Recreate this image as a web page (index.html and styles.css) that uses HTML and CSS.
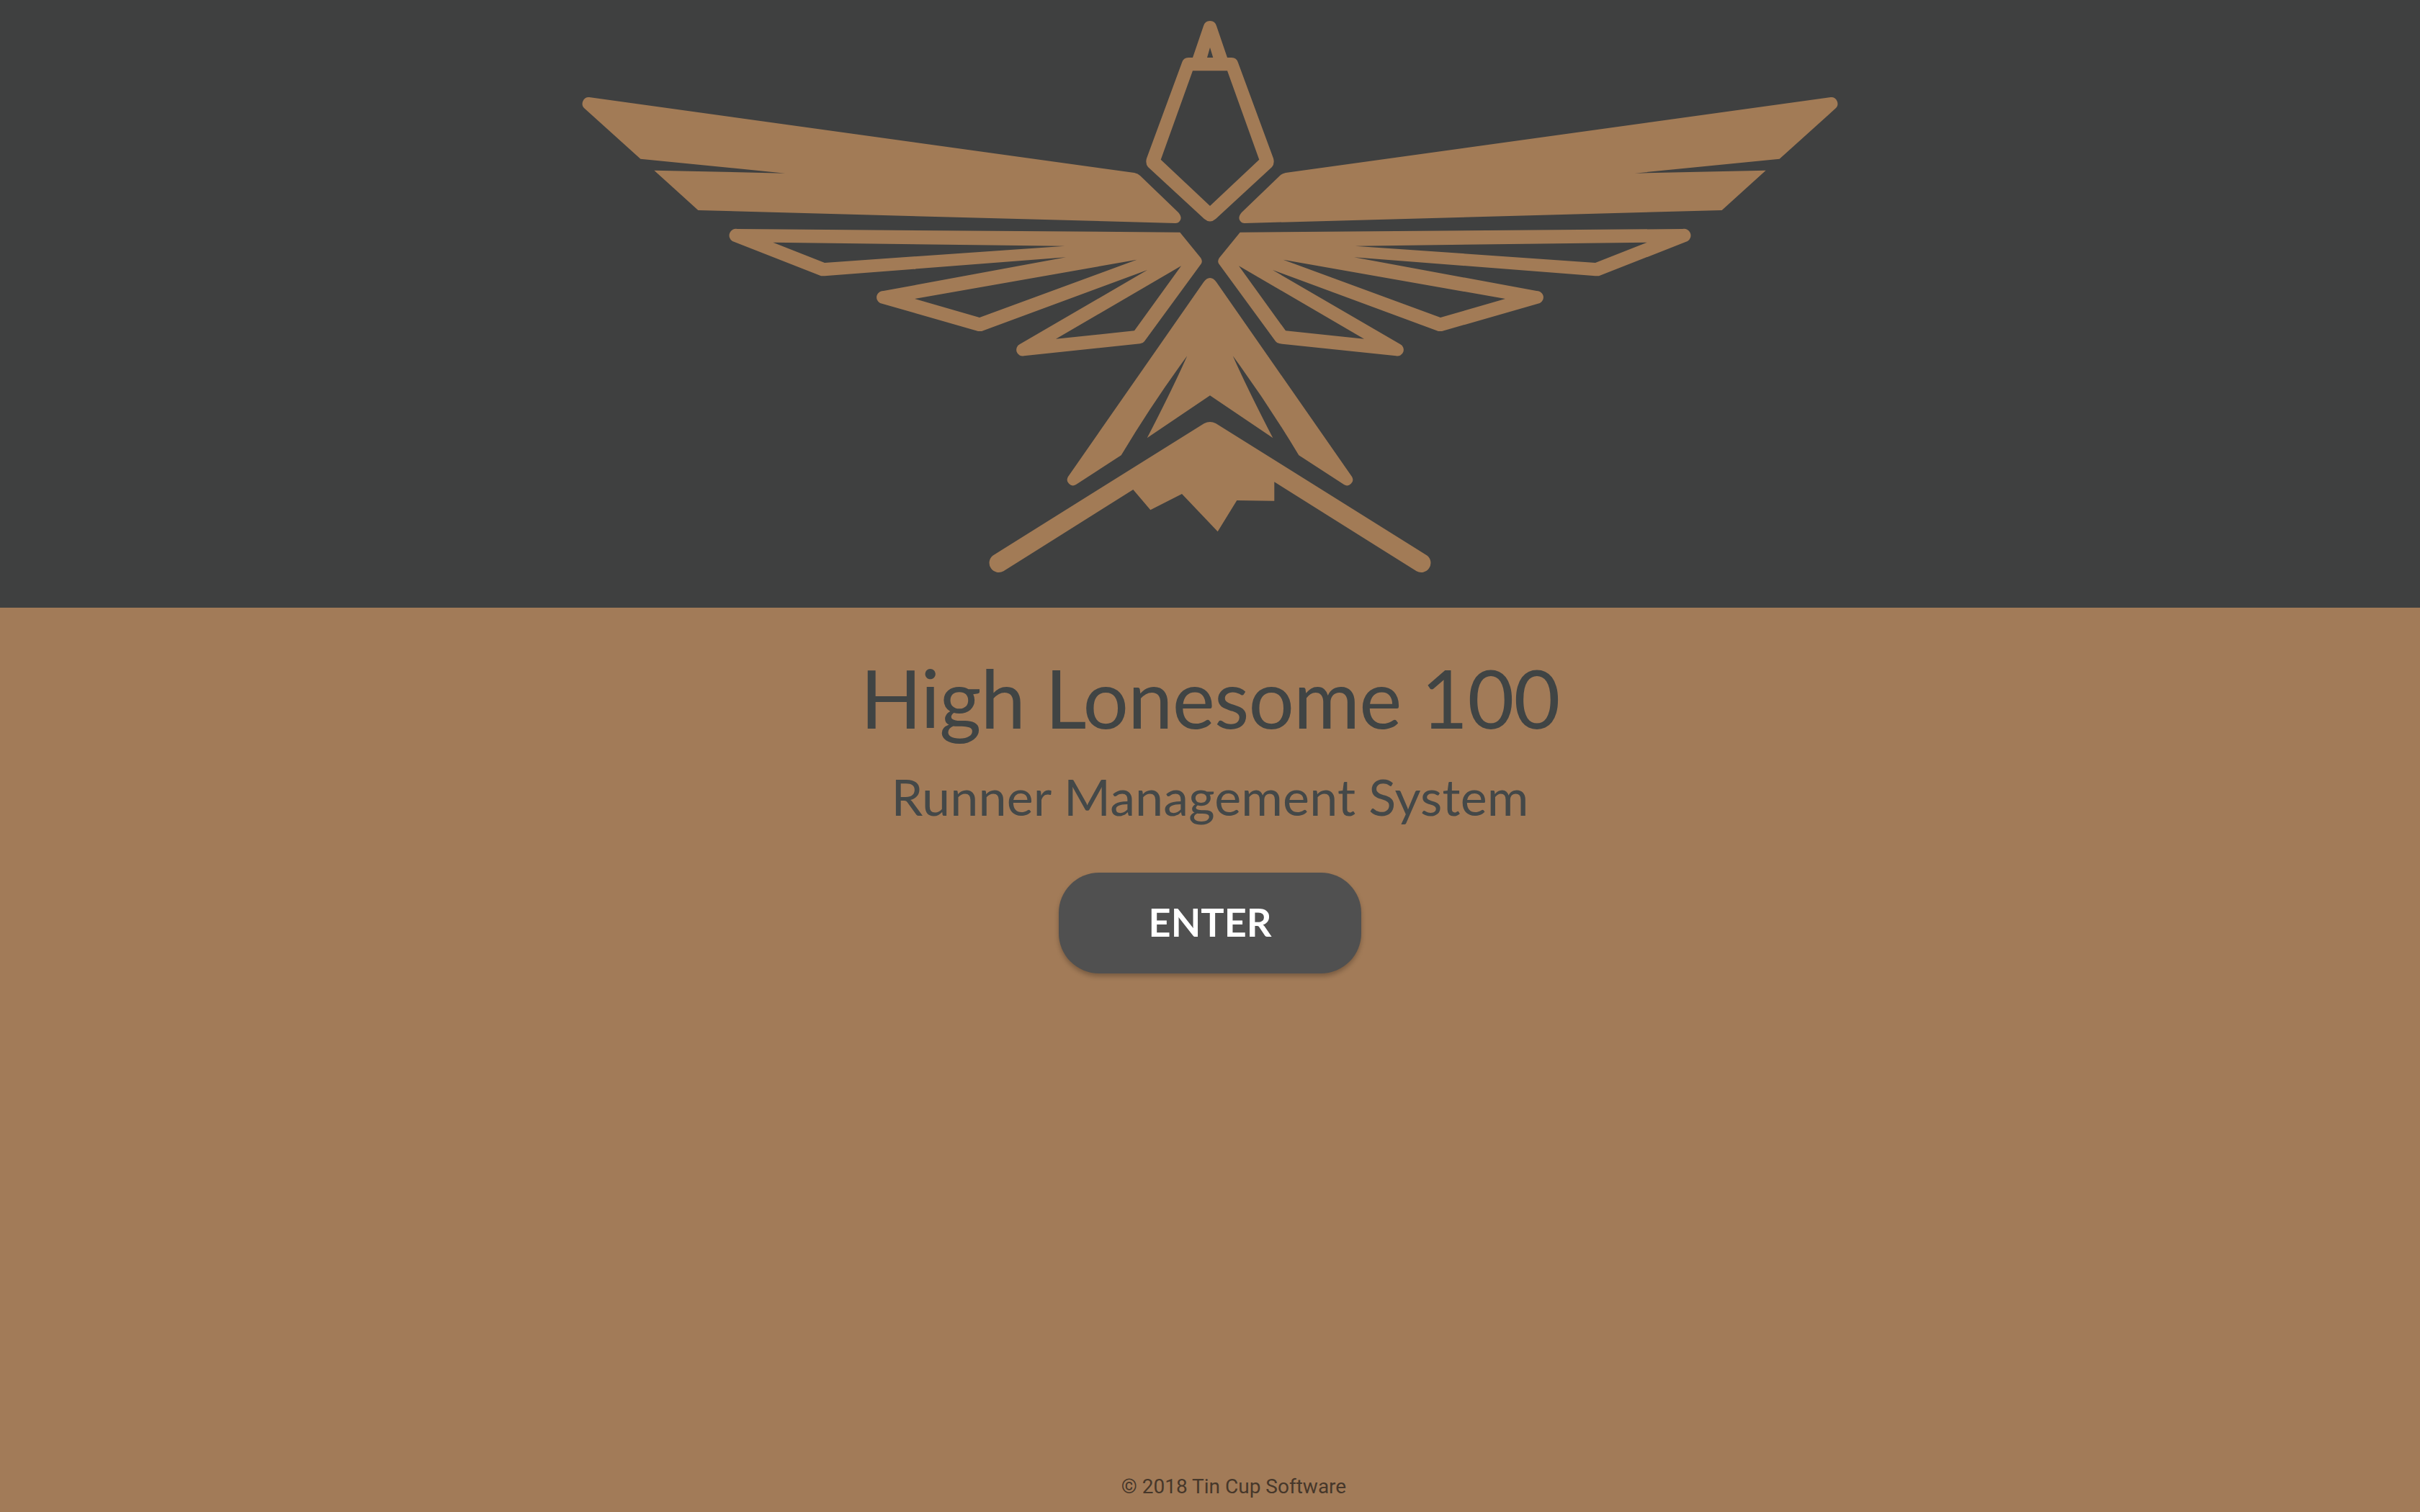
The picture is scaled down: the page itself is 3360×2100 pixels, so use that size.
FILE: index.html
```html
<!DOCTYPE html>
<html lang="en">
<head>
<meta charset="utf-8">
<title>High Lonesome 100</title>
<link rel="stylesheet" href="styles.css">
</head>
<body>
<div class="page">
  <header class="banner">
    <svg class="logo" viewBox="800 0 1760 844" xmlns="http://www.w3.org/2000/svg" aria-hidden="true">
      <defs>
        <g id="wing">
          <path d="M818 135L1575 240Q1580 241 1583 244L1636 295Q1642 302 1638 307Q1636 310 1632 310L969.3 292L908.3 236.7L1090 240.7L889.3 220.7L812 151A9 9 0 0 1 818 135Z"/>
          <path fill-rule="evenodd" d="M1024 318L1638.3 322.7L1667 358Q1670 362 1668 366L1589 474Q1587 477 1583 477.3L1421.7 494.3A8.7 8.7 0 0 1 1416 478L1593 375L1363 460L1358 460L1222 421A9 9 0 0 1 1226.7 404L1480 357.3L1145 383.3L1140 383.3L1017 335A9.3 9.3 0 0 1 1024 318ZM1073.3 336.7L1478.3 341.7L1145 365ZM1270 415L1578.3 360.7L1360 441ZM1466 470.7L1640 369.3L1575 459.3Z"/>
        </g>
      </defs>
      <g class="logo-art">
        <use href="#wing"/>
        <use href="#wing" transform="matrix(-1 0 0 1 3360 0)"/>
        <path fill-rule="evenodd" d="M1680 29Q1673 29 1671 36L1656 80L1650 80Q1643 80 1641 87L1592 220Q1590 227 1594 232L1672 304Q1680 311 1688 304L1766 232Q1770 227 1768 220L1719 87Q1717 80 1710 80L1704 80L1689 36Q1687 29 1680 29ZM1680 66L1684.3 80L1676 80ZM1656 98.3L1704 98.3L1748.3 221.7L1680 286L1611.7 221.7Z"/>
        <path d="M1680 386Q1675 386 1671 392L1483 662A8 8 0 0 0 1494 673L1556.7 632.3Q1600 560 1648.3 494.3Q1628 540 1592.7 608.3L1680 549.3L1767.3 608.3Q1732 540 1711.7 494.3Q1760 560 1803.3 632.3L1866 673A8 8 0 0 0 1877 662L1689 392Q1685 386 1680 386Z"/>
        <path d="M1680 586Q1676 586 1672 588L1378.3 771.7A13.2 13.2 0 0 0 1393.3 793.3L1573.3 680L1597.3 708.3L1641 686L1690.7 738.3L1717.3 695L1769.3 695.7L1769.3 669.3L1966.7 793.3A13.2 13.2 0 0 0 1981.7 771.7L1688 588Q1684 586 1680 586Z"/>
      </g>
    </svg>
  </header>
  <main class="intro">
    <h1 class="title">High Lonesome 100</h1>
    <h2 class="subtitle">Runner Management System</h2>
    <a class="enter" href="#">ENTER</a>
  </main>
  <footer class="footer">© 2018 Tin Cup Software</footer>
</div>
</body>
</html>
```
FILE: styles.css
```css
html, body {
  margin: 0;
  padding: 0;
}

body {
  background: #a27b58;
  font-family: "Lato", sans-serif;
}

.page {
  display: flex;
  flex-direction: column;
  height: 100vh;
}

.banner {
  display: flex;
  justify-content: center;
  flex: none;
  height: 844px;
  background: #3f4040;
}

.logo {
  display: block;
  width: 1760px;
  height: 844px;
}

.logo-art {
  fill: #a27b56;
}

.intro {
  display: flex;
  flex-direction: column;
  align-items: center;
  flex: 1;
}

.title {
  margin: 59px 0 0;
  font-size: 112px;
  font-weight: 400;
  letter-spacing: -0.9px;
  line-height: 132px;
  color: #404444;
}

.subtitle {
  margin: 29px 0 0;
  font-size: 70px;
  font-weight: 400;
  letter-spacing: 0.15px;
  line-height: 84px;
  color: #444848;
}

.enter {
  display: flex;
  align-items: center;
  justify-content: center;
  box-sizing: border-box;
  width: 420px;
  height: 140px;
  margin-top: 64px;
  padding-bottom: 4px;
  border-radius: 56px;
  background: #505050;
  box-shadow: 0 4px 6px rgba(0, 0, 0, 0.25);
  color: #fff;
  font-size: 54px;
  font-weight: 700;
  text-decoration: none;
}

.footer {
  display: flex;
  justify-content: center;
  flex: none;
  padding: 0 0 18px 66px;
  font-family: "Roboto", sans-serif;
  font-size: 28px;
  line-height: 34px;
  color: #46372a;
}
```
